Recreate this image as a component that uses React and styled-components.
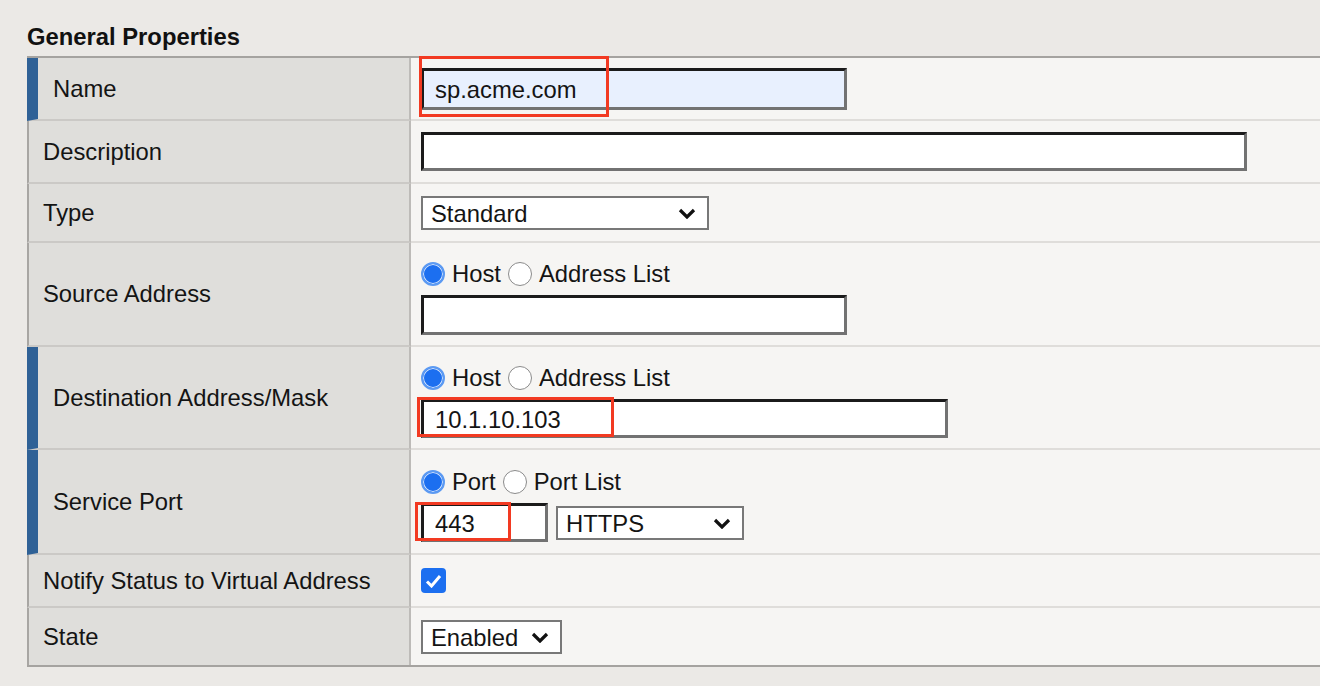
import styled, { createGlobalStyle } from 'styled-components';

const GlobalStyle = createGlobalStyle`
	html, body {
		margin: 0;
		background: #ebe9e6;
		overflow: hidden;
	}
	body {
		font-family: "Liberation Sans", Arial, sans-serif;
		color: #141414;
	}
`;

const StyledPage = styled.div`
	box-sizing: border-box;
	width: 1320px;
	height: 686px;
	padding: 23px 0 0 27px;
	overflow: hidden;
	font-size: 23.8px;
`;

const StyledTitle = styled.h2`
	margin: 0 0 6px;
	font-size: 23.8px;
	line-height: 27px;
	font-weight: 700;
	color: #111;
`;

const StyledTable = styled.div`
	width: 1320px;
	border-top: 2px solid #a5a3a0;
	border-bottom: 2px solid #a5a3a0;
`;

const StyledRow = styled.div`
	display: grid;
	grid-template-columns: 384px 1fr;
	height: ${props => props.$h}px;

	&:last-child > * {
		border-bottom: none;
	}
`;

const StyledLabel = styled.div`
	box-sizing: border-box;
	display: flex;
	align-items: center;
	background: #dfdedb;
	border-left: ${props => props.$accent ? '11px solid #2f6196' : '2px solid #a8a6a3'};
	border-right: 2px solid #bdbbb8;
	border-bottom: 2px solid #cbc9c6;
	padding-left: ${props => props.$accent ? 15 : 14}px;
	white-space: nowrap;
`;

const StyledValue = styled.div`
	box-sizing: border-box;
	display: flex;
	flex-direction: column;
	justify-content: center;
	align-items: flex-start;
	gap: 8px;
	background: #f6f5f3;
	border-bottom: 2px solid #dfddda;
	padding: ${props => props.$top || 0}px 0 0 10px;
`;

const StyledChoices = styled.div`
	display: flex;
	align-items: center;
	gap: 7px;
	height: 26px;
`;

const StyledControls = styled.div`
	display: flex;
	align-items: center;
	gap: 8px;
`;

const StyledField = styled.div`
	position: relative;
	display: flex;
`;

const StyledInput = styled.input`
	box-sizing: border-box;
	width: ${props => props.$w}px;
	height: ${props => props.$h}px;
	margin: 0;
	padding: 2px 0 0 11px;
	border: 3px solid;
	border-color: #1b1b1b #727272 #727272 #1b1b1b;
	background: ${props => props.$fill ? '#e8f0fe' : '#fff'};
	font-family: inherit;
	font-size: 23.8px;
	color: #141414;
	outline: none;
`;

const StyledMark = styled.span`
	position: absolute;
	left: ${props => props.$x}px;
	top: ${props => props.$y}px;
	width: ${props => props.$w}px;
	height: ${props => props.$h}px;
	box-sizing: border-box;
	border: 3px solid #f23a22;
	pointer-events: none;
`;

const StyledRadio = styled.span`
	box-sizing: border-box;
	width: 24px;
	height: 24px;
	border-radius: 50%;
	flex: none;
	border: ${props => props.$on ? '2px solid #5c9af2' : '1.5px solid #8b8b8b'};
	background: ${props => props.$on ? '#1c6ff0' : '#fff'};
	box-shadow: ${props => props.$on ? 'inset 0 0 0 1px #d7e6fc' : 'none'};
`;

const StyledSelect = styled.div`
	box-sizing: border-box;
	display: flex;
	align-items: center;
	justify-content: space-between;
	width: ${props => props.$w}px;
	height: 34px;
	padding: 2px 11px 0 8px;
	border: 2px solid #787878;
	background: #fff;
`;

const StyledCheck = styled.span`
	display: flex;
	align-items: center;
	justify-content: center;
	width: 25px;
	height: 25px;
	border-radius: 4px;
	background: #1c6ff0;
`;

const Chevron = () => (
	<svg width="18" height="11" viewBox="0 0 18 11">
		<polyline points="2,2 9,9 16,2" fill="none" stroke="#111" strokeWidth="3.2" />
	</svg>
);

const Select = ({ w, value }) => (
	<StyledSelect $w={w}>
		<span>{value}</span>
		<Chevron />
	</StyledSelect>
);

const Radios = ({ first, second }) => (
	<StyledChoices>
		<StyledRadio $on />
		<span>{first}</span>
		<StyledRadio />
		<span>{second}</span>
	</StyledChoices>
);

const Row = ({ h, label, accent, top, children }) => (
	<StyledRow $h={h}>
		<StyledLabel $accent={accent}>{label}</StyledLabel>
		<StyledValue $top={top}>{children}</StyledValue>
	</StyledRow>
);

const App = () => {
	return (
		<StyledPage>
			<GlobalStyle />
			<StyledTitle>General Properties</StyledTitle>
			<StyledTable>
				<Row h={63} label="Name" accent>
					<StyledField>
						<StyledInput $w={426} $h={42} $fill readOnly value="sp.acme.com" />
						<StyledMark $x={-2} $y={-12} $w={190} $h={61} />
					</StyledField>
				</Row>
				<Row h={63} label="Description">
					<StyledInput $w={826} $h={39} readOnly value="" />
				</Row>
				<Row h={59} label="Type">
					<Select w={288} value="Standard" />
				</Row>
				<Row h={104} label="Source Address" top={8}>
					<Radios first="Host" second="Address List" />
					<StyledInput $w={426} $h={40} readOnly value="" />
				</Row>
				<Row h={103} label="Destination Address/Mask" accent top={8}>
					<Radios first="Host" second="Address List" />
					<StyledField>
						<StyledInput $w={527} $h={39} readOnly value="10.1.10.103" />
						<StyledMark $x={-4} $y={-2} $w={197} $h={40} />
					</StyledField>
				</Row>
				<Row h={105} label="Service Port" accent top={8}>
					<Radios first="Port" second="Port List" />
					<StyledControls>
						<StyledField>
							<StyledInput $w={127} $h={39} readOnly value="443" />
							<StyledMark $x={-6} $y={-1} $w={96} $h={39} />
						</StyledField>
						<Select w={188} value="HTTPS" />
					</StyledControls>
				</Row>
				<Row h={53} label="Notify Status to Virtual Address">
					<StyledCheck>
						<svg width="17" height="14" viewBox="0 0 17 14">
							<polyline points="2,7.5 6.5,12 15,2" fill="none" stroke="#fff" strokeWidth="3" />
						</svg>
					</StyledCheck>
				</Row>
				<Row h={57} label="State">
					<Select w={141} value="Enabled" />
				</Row>
			</StyledTable>
		</StyledPage>
	);
};

export default App;
